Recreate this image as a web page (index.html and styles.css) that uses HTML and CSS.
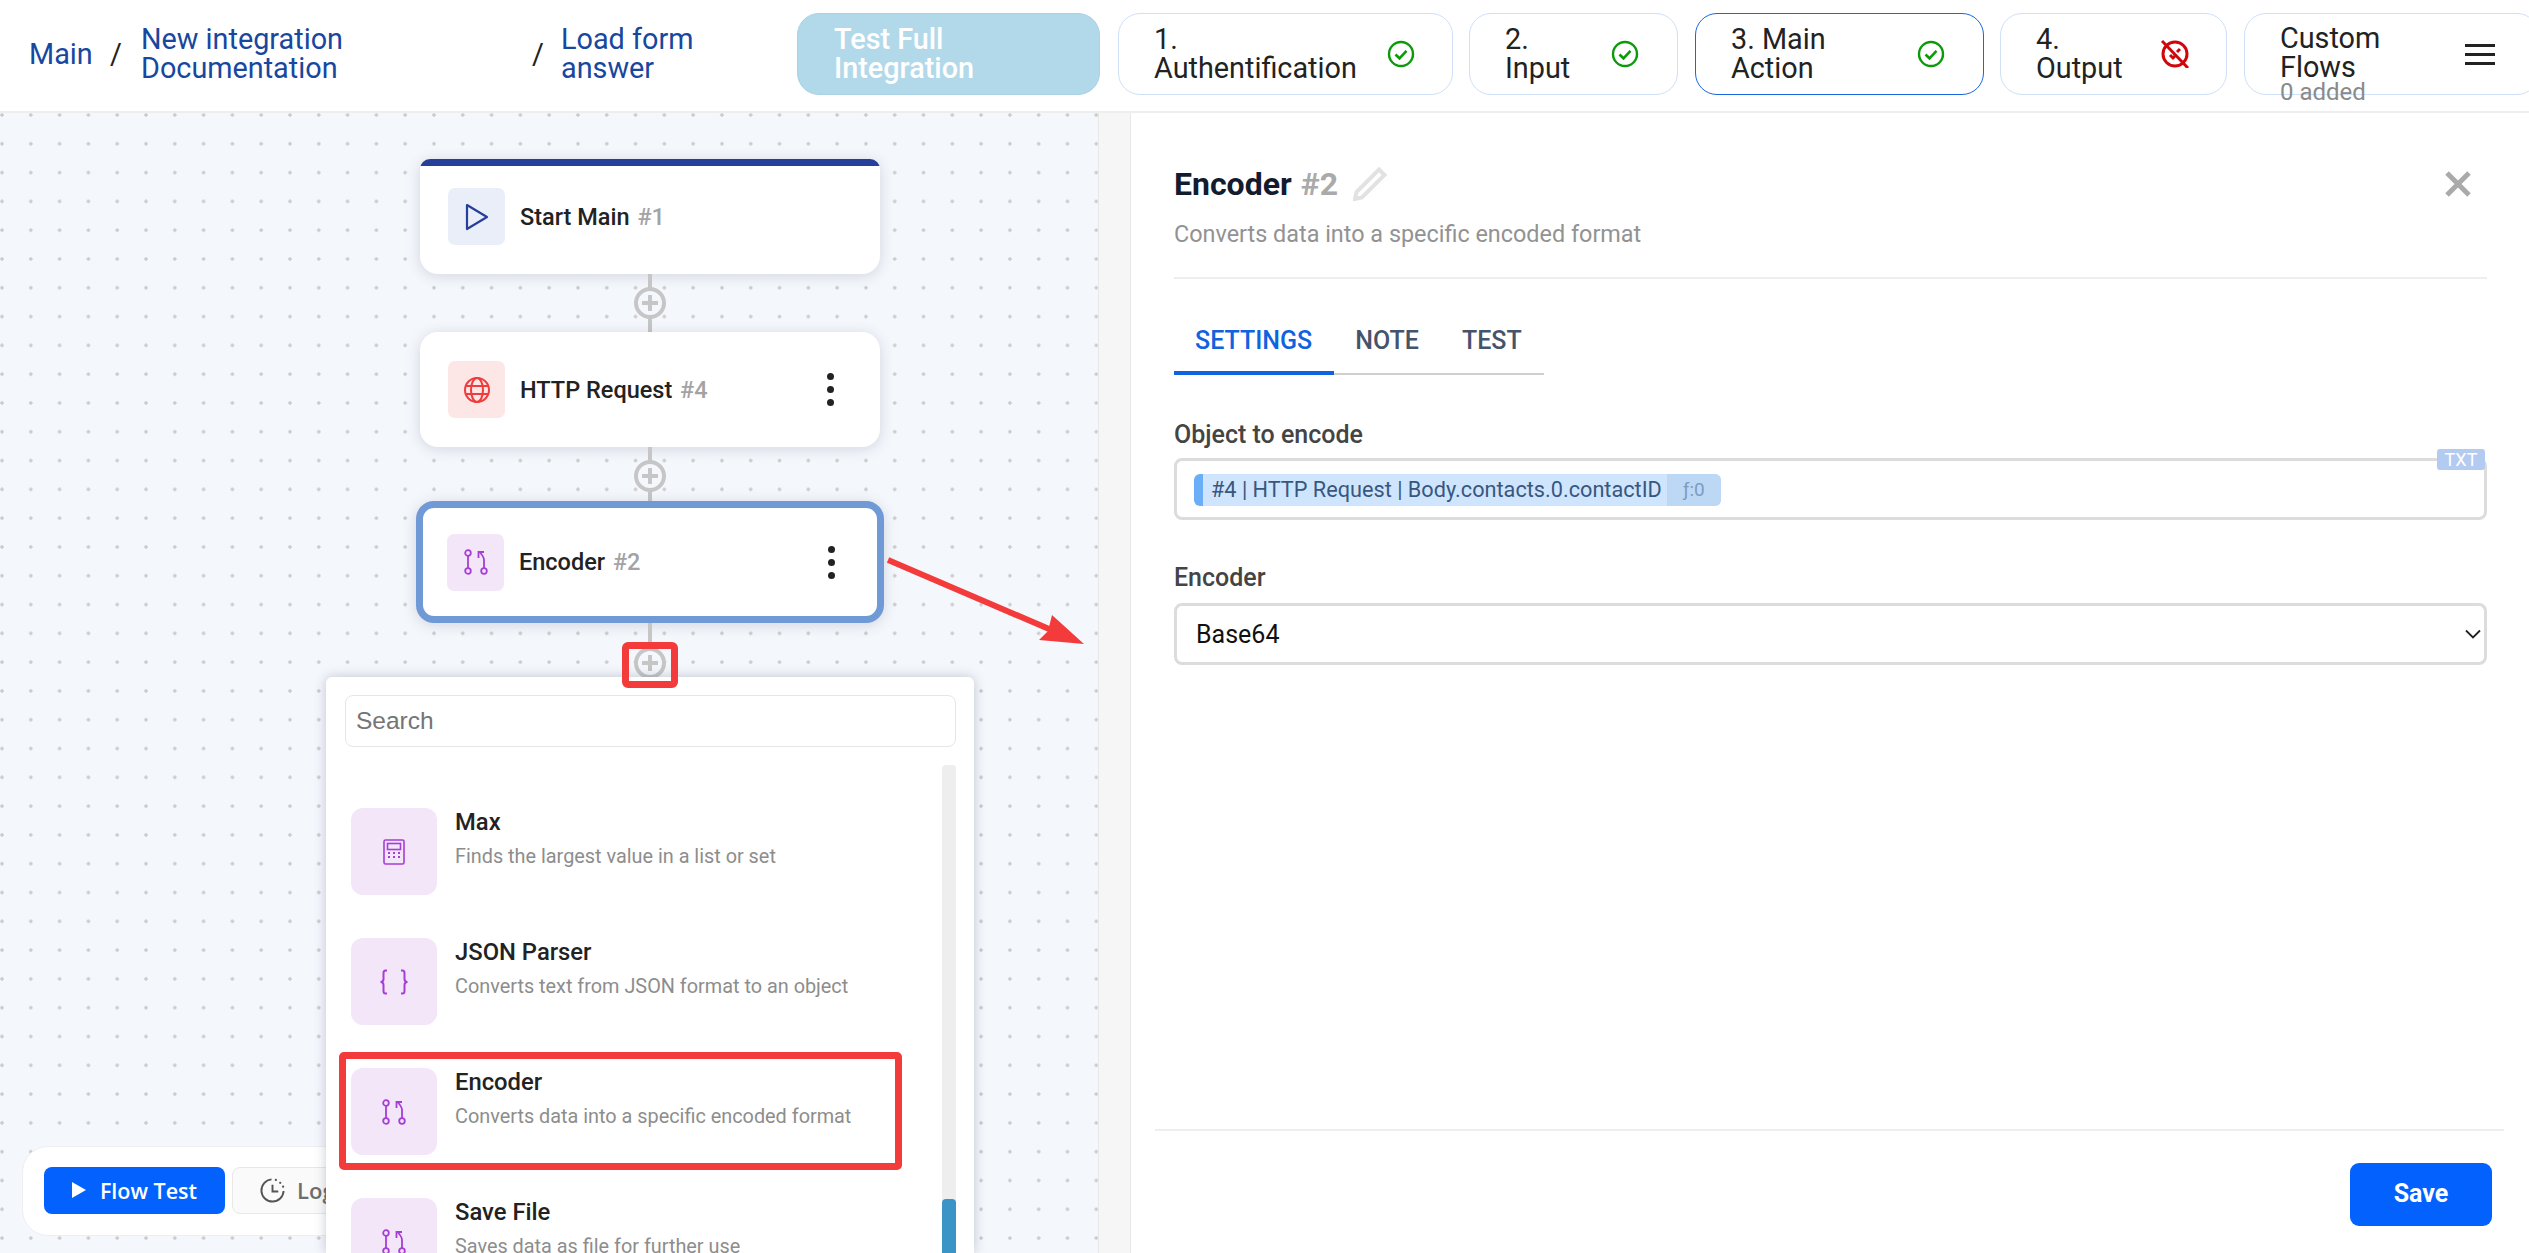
FILE: index.html
```html
<!doctype html>
<html lang="en">
<head>
<meta charset="utf-8">
<title>Encoder settings</title>
<link rel="stylesheet" href="styles.css">
</head>
<body>

<div class="topbar">
	<div class="crumbs">
		<a class="crumb crumbMain">Main</a>
		<span class="sep">/</span>
		<a class="crumb crumbIntegration">New integration Documentation</a>
		<span class="sep">/</span>
		<a class="crumb crumbForm">Load form answer</a>
	</div>
	<button class="btnTest">Test Full Integration</button>
	<div class="step stepAuth"><span class="stepText">1. Authentification</span>
		<svg class="stepIcon" viewBox="0 0 28 28"><circle cx="14" cy="14" r="12" fill="none" stroke="#0a9a0a" stroke-width="2.4"/><path d="M8.5 14.5l4 3.8 7-7.4" fill="none" stroke="#0a9a0a" stroke-width="2.6"/></svg>
	</div>
	<div class="step stepInput"><span class="stepText">2. Input</span>
		<svg class="stepIcon" viewBox="0 0 28 28"><circle cx="14" cy="14" r="12" fill="none" stroke="#0a9a0a" stroke-width="2.4"/><path d="M8.5 14.5l4 3.8 7-7.4" fill="none" stroke="#0a9a0a" stroke-width="2.6"/></svg>
	</div>
	<div class="step stepMain active"><span class="stepText">3. Main Action</span>
		<svg class="stepIcon" viewBox="0 0 28 28"><circle cx="14" cy="14" r="12" fill="none" stroke="#0a9a0a" stroke-width="2.4"/><path d="M8.5 14.5l4 3.8 7-7.4" fill="none" stroke="#0a9a0a" stroke-width="2.6"/></svg>
	</div>
	<div class="step stepOutput"><span class="stepText">4. Output</span>
		<svg class="stepIcon" viewBox="0 0 28 28"><circle cx="14" cy="14" r="12" fill="none" stroke="#d0060c" stroke-width="3"/><path d="M1 1l26 27" stroke="#d0060c" stroke-width="3"/><path d="M9 15l3 3 2-2M16 12l3-3" fill="none" stroke="#d0060c" stroke-width="3"/></svg>
	</div>
	<div class="step stepCustom"><span class="stepText">Custom Flows<small class="stepNote">0 added</small></span>
		<svg class="menuIcon" viewBox="0 0 30 21"><path d="M0 1.5h30M0 10.5h30M0 19.5h30" stroke="#222" stroke-width="3"/></svg>
	</div>
</div>

<div class="main">
	<div class="canvas">

		<div class="node nodeStart">
			<span class="nodeIcon iconBlue"><svg viewBox="0 0 24 28" width="24" height="28"><path d="M2 2l20 12-20 12z" fill="none" stroke="#26409a" stroke-width="2.2" stroke-linejoin="round"/></svg></span>
			<span class="nodeName">Start Main <em>#1</em></span>
		</div>
		<div class="link linkA"><span class="plus"></span></div>

		<div class="node">
			<span class="nodeIcon iconRed"><svg viewBox="0 0 28 28" width="28" height="28"><g fill="none" stroke="#ef3c3c" stroke-width="2"><circle cx="14" cy="14" r="12"/><ellipse cx="14" cy="14" rx="6" ry="12"/><path d="M2 10h24M2 18h24"/></g></svg></span>
			<span class="nodeName">HTTP Request <em>#4</em></span>
			<span class="dots"><i></i><i></i><i></i></span>
		</div>
		<div class="link linkB"><span class="plus"></span></div>

		<div class="node nodeSel">
			<span class="nodeIcon iconPurple"><svg viewBox="0 0 26 26" width="26" height="26"><use href="#encoderGlyph"/></svg></span>
			<span class="nodeName">Encoder <em>#2</em></span>
			<span class="dots"><i></i><i></i><i></i></span>
		</div>
		<div class="link linkC"><span class="plus"></span></div>

		<div class="toolbar">
			<button class="btnFlow"><svg viewBox="0 0 14 16" width="14" height="16"><path d="M0 0l14 8-14 8z" fill="#fff"/></svg>Flow Test</button>
			<button class="btnLogs"><svg viewBox="0 0 28 28" width="27" height="27"><path d="M13 2.5a11.5 11.5 0 1 0 12.5 12" fill="none" stroke="#555" stroke-width="2"/><path d="M14 8v7h6" fill="none" stroke="#555" stroke-width="2"/><circle cx="17.500" cy="3" r="1.200" fill="#555"/><circle cx="22" cy="6" r="1.200" fill="#555"/><circle cx="25" cy="10" r="1.200" fill="#555"/></svg>Logs</button>
		</div>

		<div class="picker">
			<input class="pickerSearch" placeholder="Search">
			<div class="pickerBody">
				<div class="pickerList">
					<div class="item">
						<span class="itemIcon"><svg viewBox="0 0 22 26" width="22" height="26"><g fill="none" stroke="#a63ed6" stroke-width="1.600"><rect x="1" y="1" width="20" height="24" rx="1.500"/><rect x="4.500" y="4.500" width="13" height="6"/></g><path d="M5 14h2M10 14h2M15 14h2M5 18h2M10 18h2M15 18h2" stroke="#a63ed6" stroke-width="2"/></svg></span>
						<div><div class="itemName">Max</div><div class="itemDesc">Finds the largest value in a list or set</div></div>
					</div>
					<div class="item">
						<span class="itemIcon"><svg viewBox="0 0 32 26" width="32" height="26"><path d="M9 1.500H7.500Q5.500 1.500 5.500 4v6q0 3-3 3 3 0 3 3v6q0 2.500 2 2.500H9M23 1.500h1.500q2 0 2 2.500v6q0 3 3 3-3 0-3 3v6q0 2.500-2 2.500H23" fill="none" stroke="#a63ed6" stroke-width="2"/></svg></span>
						<div><div class="itemName">JSON Parser</div><div class="itemDesc">Converts text from JSON format to an object</div></div>
					</div>
					<div class="item">
						<span class="itemIcon"><svg viewBox="0 0 26 26" width="26" height="26"><use href="#encoderGlyph"/></svg></span>
						<div><div class="itemName">Encoder</div><div class="itemDesc">Converts data into a specific encoded format</div></div>
					</div>
					<div class="item">
						<span class="itemIcon"><svg viewBox="0 0 26 26" width="26" height="26"><use href="#encoderGlyph"/></svg></span>
						<div><div class="itemName">Save File</div><div class="itemDesc">Saves data as file for further use</div></div>
					</div>
				</div>
				<div class="scrollTrack"><div class="scrollThumb"></div></div>
			</div>
		</div>

		<div class="markPlus"></div>
		<div class="markItem"></div>
		<svg class="markArrow" viewBox="0 0 200 90" width="200" height="90"><path d="M1 3L176 78" stroke="#f43b3b" stroke-width="6" fill="none"/><path d="M197 87L152 83L161 74L165 58z" fill="#f43b3b"/></svg>
	</div>

	<div class="grip"></div>

	<div class="panel">
		<div class="panelBody">
			<div class="panelHead">
				<h2 class="panelTitle">Encoder <em>#2</em>
					<svg class="pencil" viewBox="0 0 34 34" width="34" height="34"><path d="M26 2.500l5.500 5.500L9 30.500 2 32l1.500-7z" fill="none" stroke="#e2e2e2" stroke-width="4"/></svg>
				</h2>
				<svg class="close" viewBox="0 0 28 28" width="28" height="28"><path d="M3 3l22 22M25 3L3 25" stroke="#aaa" stroke-width="5"/></svg>
			</div>
			<p class="panelSub">Converts data into a specific encoded format</p>

			<div class="tabs">
				<span class="tab tabOn">SETTINGS</span>
				<span class="tab">NOTE</span>
				<span class="tab">TEST</span>
			</div>

			<label class="fieldLabel">Object to encode</label>
			<div class="field fieldChip">
				<span class="badge">TXT</span>
				<span class="chip"><span class="chipText">#4 | HTTP Request | Body.contacts.0.contactID</span><span class="chipFn">ƒ:0</span></span>
			</div>

			<label class="fieldLabel">Encoder</label>
			<div class="field fieldSelect">
				<span>Base64</span>
				<svg viewBox="0 0 16 10" width="16" height="10"><path d="M1 1.500l7 7 7-7" fill="none" stroke="#222" stroke-width="1.800"/></svg>
			</div>
		</div>
		<div class="panelFoot"><button class="btnSave">Save</button></div>
	</div>
</div>

<svg class="defs" width="0" height="0"><defs>
	<g id="encoderGlyph" fill="none" stroke="#a63ed6" stroke-width="1.800">
		<circle cx="5" cy="4" r="2.800"/><path d="M5 7v12"/><circle cx="5" cy="22" r="2.800"/>
		<circle cx="21" cy="22" r="2.800"/><path d="M21 19V11Q21 8 17 3.500"/><path d="M15.500 9V3H21"/>
	</g>
</defs></svg>

</body>
</html>
```

FILE: styles.css
```css
* { box-sizing: border-box; }

html, body { height: 100%; }
body { margin: 0; overflow: hidden; background: #fff; color: #222; font-family: Roboto, sans-serif; display: flex; flex-direction: column; }
button { font-family: inherit; cursor: pointer; }
em { font-style: normal; }

/* top bar */
.topbar { height: 113px; flex: none; display: flex; align-items: flex-start; padding: 13px 0 0 29px; border-bottom: 2px solid #eee; font-size: 28.8px; line-height: 29px; }

.crumbs { width: 768px; height: 82px; flex: none; display: flex; align-items: center; color: #222; }
.crumb { color: #17479e; }
.crumbMain { width: 81px; }
.sep { width: 31px; }
.sep + .crumbForm { margin-left: -2px; }
.crumbIntegration { width: 391px; padding-right: 150px; }
.crumbForm { width: 170px; padding-right: 20px; }

.btnTest { width: 303px; height: 82px; flex: none; padding: 0 36px; border: 1px solid #a9d2e4; border-radius: 22px; background: #b2d9e9; color: #fff; font-size: 28.8px; line-height: 29px; font-weight: 500; text-align: left; }

.step { height: 82px; flex: none; margin-left: 17px; padding: 0 38px 0 35px; display: flex; align-items: center; justify-content: space-between; border: 1px solid #cfe0f7; border-radius: 22px; color: #222; }
.step.active { border-color: #1a66e0; }
.stepText { display: block; width: min-content; }
.stepAuth { width: 335px; margin-left: 18px; padding-right: 37px; }
.stepInput { width: 209px; margin-left: 16px; }
.stepMain { width: 289px; }
.stepMain .stepText { width: 130px; }
.stepOutput { width: 227px; margin-left: 16px; padding-right: 37px; }
.stepCustom { width: 295px; padding-right: 43px; position: relative; }
.stepCustom .stepText { margin-top: -2px; }
.stepIcon { width: 28px; height: 28px; flex: none; }
.menuIcon { width: 30px; height: 21px; flex: none; }
.stepNote { position: absolute; left: 35px; top: 64px; font-size: 24px; line-height: 29px; color: #8a8a8a; }

/* canvas */
.main { flex: 1; display: flex; min-height: 0; }

.canvas { width: 1098px; flex: none; position: relative; overflow: hidden; padding: 46px 0 0 202px; display: flex; flex-direction: column; align-items: center; background-color: #f4f7fc; background-image: radial-gradient(circle at 2px 2px, #cacaca 1.400px, transparent 2px); background-size: 28.8px 28.8px; }

.node { width: 460px; height: 115px; flex: none; display: flex; align-items: center; padding: 0 28px; background: #fff; border-radius: 18px; box-shadow: 0 2px 14px rgba(60, 70, 90, 0.18); font-size: 23.5px; font-weight: 500; color: #222; }
.nodeStart { border-radius: 10px 10px 18px 18px; background: linear-gradient(#26409a, #26409a) top / 100% 7px no-repeat, #fff; }
.nodeSel { width: 468px; height: 122px; border: 7px solid #6f9ad6; padding: 0 24px; }
.nodeIcon { width: 57px; height: 57px; flex: none; display: flex; align-items: center; justify-content: center; border-radius: 7px; }
.iconBlue { background: #e9eef9; }
.iconRed { background: #fde6e6; }
.iconPurple { background: #f3e6f9; }
.nodeName { flex: 1; margin-left: 15px; }
.nodeName em { color: #a3a3a3; margin-left: 2px; }

.dots { display: flex; flex-direction: column; gap: 6px; margin-right: 18px; }
.dots i { width: 7px; height: 7px; border-radius: 50%; background: #222; }

.link { width: 32px; flex: none; display: flex; align-items: center; justify-content: center; background: linear-gradient(#c6c6c6, #c6c6c6) center / 4px 100% no-repeat; }
.linkA { height: 58px; }
.linkB { height: 54px; padding-top: 4px; }
.linkC { height: 80px; }
.plus { width: 32px; height: 32px; flex: none; border: 4px solid #c6c6c6; border-radius: 50%; background: linear-gradient(#c6c6c6, #c6c6c6) center / 16px 4px no-repeat, linear-gradient(#c6c6c6, #c6c6c6) center / 4px 16px no-repeat, #f4f7fc; }

/* flow test bar */
.toolbar { position: absolute; left: 22px; top: 1033px; width: 400px; height: 90px; display: flex; align-items: center; gap: 7px; padding: 0 0 2px 21px; background: #fff; border: 1px solid #eceef2; border-radius: 26px; }
.btnFlow { width: 181px; height: 47px; display: flex; align-items: center; justify-content: center; gap: 14px; border: none; border-radius: 8px; background: #0362fd; color: #fff; font-family: "Open Sans", sans-serif; font-size: 21.5px; font-weight: 600; }
.btnLogs { width: 160px; height: 47px; display: flex; align-items: center; gap: 11px; padding: 0 0 0 26px; border: 1px solid #e8e8e8; border-radius: 8px; background: #fafafa; color: #6d6d6d; font-family: "Open Sans", sans-serif; font-size: 22px; font-weight: 600; }

/* node picker */
.picker { position: absolute; left: 326px; top: 564px; bottom: 0; width: 648px; display: flex; flex-direction: column; padding: 18px 18px 0 19px; background: #fff; border-radius: 6px 6px 0 0; box-shadow: 0 0 12px rgba(60, 70, 90, 0.28); }
.pickerSearch { width: 100%; height: 52px; flex: none; padding: 0 10px; border: 1px solid #e6e6e6; border-radius: 8px; font-family: "Liberation Sans", sans-serif; font-size: 24.5px; outline: none; }
.pickerSearch::placeholder { color: #757575; opacity: 1; }
.pickerBody { flex: 1; min-height: 0; display: flex; margin-top: 18px; overflow: hidden; }
.pickerList { flex: 1; padding: 43px 0 0 6px; display: flex; flex-direction: column; gap: 43px; }
.item { height: 87px; flex: none; display: flex; gap: 18px; }
.itemIcon { width: 86px; height: 87px; flex: none; display: flex; align-items: center; justify-content: center; border-radius: 12px; background: #f3e6f9; }
.itemName { font-size: 23.8px; font-weight: 500; line-height: 28px; color: #222; }
.itemDesc { margin-top: 7px; font-size: 19.85px; line-height: 28px; color: #8d8d8d; }
.scrollTrack { width: 14px; flex: none; position: relative; background: #eee; border-radius: 4px 4px 0 0; }
.scrollThumb { position: absolute; left: 0; right: 0; top: 434px; bottom: 0; background: #3b94c6; border-radius: 4px 4px 0 0; }

/* red annotations */
.markPlus { position: absolute; left: 622px; top: 529px; width: 56px; height: 46px; border: 7px solid #f43b3b; border-radius: 6px; }
.markItem { position: absolute; left: 339px; top: 939px; width: 563px; height: 118px; border: 7px solid #f43b3b; border-radius: 5px; }
.markArrow { position: absolute; left: 887px; top: 444px; }

/* right panel */
.grip { width: 33px; flex: none; background: #f6f6f6; border-right: 1px solid #e8e8e8; border-left: 1px solid #e8e8e8; }
.panel { flex: 1; min-width: 0; display: flex; flex-direction: column; }
.panelBody { flex: 1; padding: 49px 42px 0 43px; }
.panelHead { display: flex; align-items: center; justify-content: space-between; padding-right: 15px; height: 44px; }
.panelTitle { margin: 0; display: flex; align-items: center; font-size: 32px; font-weight: 700; color: #131c2e; }
.panelTitle em { margin-left: 9px; color: #aaa; }
.pencil { margin-left: 15px; }
.panelSub { margin: 14px 0 0; padding-bottom: 29px; border-bottom: 2px solid #eee; font-size: 23.4px; line-height: 28px; color: #929292; }

.tabs { display: inline-flex; margin-top: 35px; border-bottom: 2px solid #cfcfcf; height: 61px; }
.tab { padding: 13px 22px 0 21px; font-size: 25px; font-weight: 500; line-height: 28px; color: #46536c; }
.tabOn { color: #0f62e0; height: 61px; border-bottom: 4px solid #0f62e0; }

.fieldLabel { display: block; margin-top: 44px; font-size: 25px; font-weight: 500; line-height: 28px; color: #444; }
.tabs + .fieldLabel { margin-top: 46px; }
.field { height: 62px; margin-top: 11px; position: relative; display: flex; align-items: center; border: 3px solid #dcdcdc; border-radius: 8px; }
.fieldChip { margin-top: 9px; padding: 2px 0 0 17px; }
.badge { position: absolute; right: -1px; top: -12px; width: 48px; height: 21px; display: block; text-align: center; background: #b3cbf1; border-radius: 3px; color: #fff; font-size: 18px; line-height: 21px; }
.chip { height: 32px; display: flex; border-left: 9px solid #69aef7; border-radius: 6px; background: #cfe5fd; overflow: hidden; font-size: 21.7px; line-height: 32px; color: #38577f; }
.chipText { padding: 0 5px 0 8px; }
.chipFn { width: 54px; text-align: center; background: #bdd8f5; color: #7d9cc0; font-size: 19px; }
.fieldSelect { justify-content: space-between; padding: 0 3px 0 19px; font-size: 25px; color: #111; }

.panelFoot { height: 124px; flex: none; margin: 0 25px 0 24px; padding: 32px 12px 0 0; display: flex; justify-content: flex-end; align-items: flex-start; border-top: 2px solid #eee; }
.btnSave { width: 142px; height: 63px; padding-bottom: 3px; border: none; border-radius: 9px; background: #0362fd; color: #fff; font-size: 25px; font-weight: 700; }

.defs { position: absolute; }
```
